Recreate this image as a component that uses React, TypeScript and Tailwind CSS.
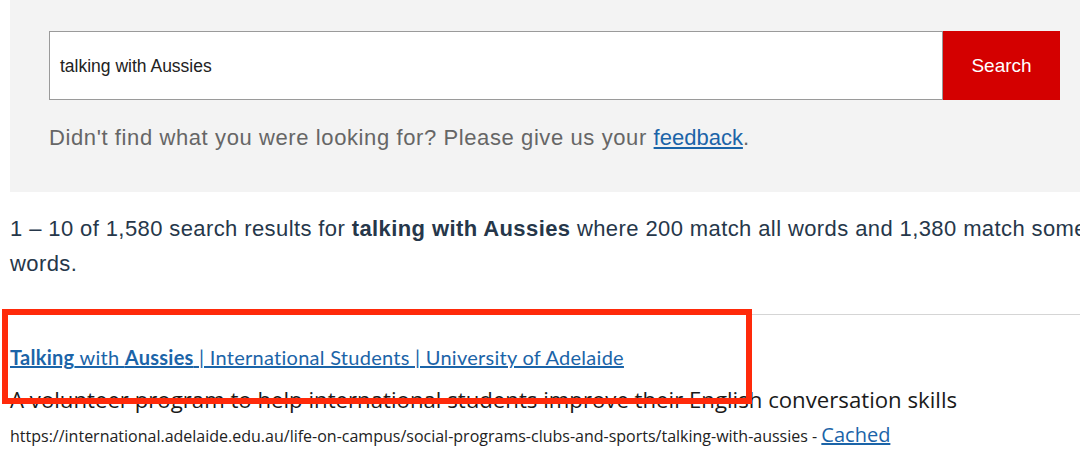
import React from "react";

export default function App() {
  return (
    <div className="relative w-[1080px] h-[462px] overflow-hidden bg-white">
      <div className="w-[1130px]">
        <div className="ml-[10px] h-[192px] bg-[#f3f3f3] pt-[31px] pl-[39px]">
          <div className="flex w-[1011px] h-[69px]">
            <div className="flex-1 flex items-center border border-[#9a9a9a] bg-white pl-[10px] pt-[2px] text-[17.5px] text-[#222] font-['Liberation_Sans',sans-serif]">
              talking with Aussies
            </div>
            <div className="w-[117px] flex items-center justify-center pt-[2px] bg-[#d40000] text-white text-[19px] font-['Liberation_Sans',sans-serif]">
              Search
            </div>
          </div>
          <p className="mt-[21px] text-[22px] tracking-[0.6px] text-[#666] font-['Liberation_Sans',sans-serif]">
            Didn't find what you were looking for? Please give us your{" "}
            <span className="text-[#1b64a8] underline tracking-normal">feedback</span>.
          </p>
        </div>
        <p className="mt-[19px] pl-[10px] w-[1130px] text-[22px] tracking-[0.4px] leading-[35px] text-[#26374a] font-['Liberation_Sans',sans-serif]">
          1 – 10 of 1,580 search results for <b>talking with Aussies</b> where 200 match all words and 1,380 match some words.
        </p>
        <div className="ml-[10px] mt-[33px] border-t border-[#d5d5d5] pt-[28px]">
          <a className="block text-[20px] tracking-[0.27px] text-[#1b64a8] underline font-['Lato',sans-serif] leading-[28px]">
            <b>Talking</b> with <b>Aussies</b> | International Students | University of Adelaide
          </a>
          <p className="mt-[14px] text-[22.2px] leading-[30px] text-[#1a1a1a] font-['Open_Sans',sans-serif]">
            A volunteer program to help international students improve their English conversation skills
          </p>
          <p className="mt-[5px] text-[16px] text-[#222] font-['Open_Sans',sans-serif]">
            https://international.adelaide.edu.au/life-on-campus/social-programs-clubs-and-sports/talking-with-aussies -{" "}
            <span className="text-[20px] text-[#1b64a8] underline">Cached</span>
          </p>
        </div>
      </div>
      <div className="absolute left-[2px] top-[309px] w-[750px] h-[95px] border-[6px] border-[#ff2a0a]" />
    </div>
  );
}
